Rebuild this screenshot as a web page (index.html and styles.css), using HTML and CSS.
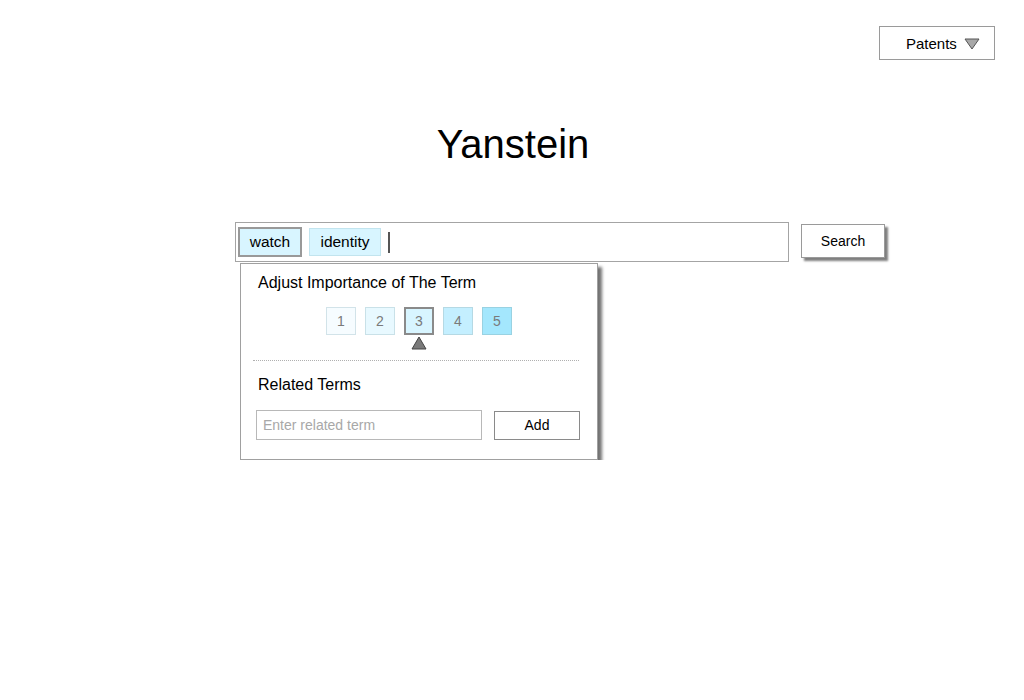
FILE: index.html
```html
<!DOCTYPE html>
<html>
<head>
<meta charset="utf-8">
<link rel="stylesheet" href="styles.css">
</head>
<body>
  <header class="topbar">
    <div class="select">
      <span class="select-label">Patents</span>
      <svg class="select-arrow" width="16" height="12" viewBox="0 0 16 12"><polygon points="1,1 15,1 8,11" fill="#a8a8a8" stroke="#555" stroke-width="1"/></svg>
    </div>
  </header>
  <h1 class="title">Yanstein</h1>
  <main class="search-area">
    <div class="search-row">
      <div class="search-box">
        <span class="tag tag-active">watch</span>
        <span class="tag tag-plain">identity</span>
        <span class="caret"></span>
      </div>
      <div class="search-btn">Search</div>
    </div>
    <section class="term-menu">
      <div class="menu-heading">Adjust Importance of The Term</div>
      <div class="levels">
        <div class="level-cell"><span class="level l1">1</span></div>
        <div class="level-cell"><span class="level l2">2</span></div>
        <div class="level-cell"><span class="level l3">3</span><svg class="pointer" width="16" height="14" viewBox="0 0 16 14"><polygon points="8,1 15,13 1,13" fill="#7a7a7a" stroke="#444" stroke-width="1"/></svg></div>
        <div class="level-cell"><span class="level l4">4</span></div>
        <div class="level-cell"><span class="level l5">5</span></div>
      </div>
      <div class="divider"></div>
      <div class="menu-heading related">Related Terms</div>
      <div class="add-row">
        <div class="term-input">Enter related term</div>
        <div class="add-btn">Add</div>
      </div>
    </section>
  </main>
</body>
</html>
```

FILE: styles.css
```css
* { box-sizing: border-box; }
body {
  margin: 0;
  font-family: "Liberation Sans", Arial, sans-serif;
  color: #000;
  background: #fff;
}
.topbar {
  display: flex;
  justify-content: flex-end;
  padding: 26px 29px 0 0;
}
.select {
  width: 116px;
  height: 34px;
  border: 1px solid #9a9a9a;
  display: flex;
  align-items: center;
  padding-left: 26px;
  font-size: 15px;
}
.select-arrow { margin-left: 7px; margin-top: 1px; }
.title {
  margin: 61px 0 0 0;
  text-align: center;
  font-weight: normal;
  font-size: 40px;
  line-height: 46px;
  padding-left: 2px;
}
.search-area {
  display: block;
  margin-top: 55px;
  padding-left: 235px;
}
.search-row {
  display: flex;
  align-items: flex-start;
}
.search-box {
  width: 554px;
  height: 40px;
  border: 1px solid #a4a4a4;
  display: flex;
  align-items: center;
  padding-left: 2px;
  gap: 7px;
}
.tag {
  height: 28px;
  background: #d8f5ff;
  border: 1px solid #c2e4ee;
  font-size: 15.5px;
  display: flex;
  align-items: center;
  justify-content: center;
}
.tag-plain { width: 72px; }
.tag-active {
  width: 64px;
  height: 30px;
  border: 2px solid #999;
}
.caret {
  width: 2px;
  height: 21px;
  background: #555;
}
.search-btn {
  margin-left: 12px;
  margin-top: 2px;
  width: 84px;
  height: 34px;
  border: 1px solid #9a9a9a;
  display: flex;
  align-items: center;
  justify-content: center;
  font-size: 14px;
  box-shadow: 3px 3px 2px rgba(0,0,0,0.5);
}
.term-menu {
  display: block;
  margin: 1px 0 0 5px;
  width: 358px;
  background: #fff;
  border: 1px solid #a0a0a0;
  box-shadow: 4px 4px 3px rgba(0,0,0,0.55);
  padding: 9px 0 19px 0;
}
.menu-heading {
  margin-left: 17px;
  font-size: 16px;
  line-height: 20px;
}
.levels {
  display: flex;
  justify-content: center;
  gap: 9px;
  margin-top: 14px;
}
.level-cell {
  display: flex;
  flex-direction: column;
  align-items: center;
  width: 30px;
  height: 43px;
}
.level {
  width: 30px;
  height: 28px;
  border: 1px solid #c8dde4;
  display: flex;
  align-items: center;
  justify-content: center;
  font-size: 14px;
  color: #7a7a7a;
}
.pointer { margin-top: 1px; }
.l1 { background: #f6fcff; border-color: #d2e3e9; }
.l2 { background: #e8f9ff; border-color: #c9e1e8; }
.l3 { background: #d8f5ff; border: 2px solid #8a8a8a; }
.l4 { background: #c4efff; border-color: #b5d9e4; }
.l5 { background: #a4e7fd; border-color: #99d2e2; }
.divider {
  margin: 10px 18px 0 12px;
  border-top: 1px dotted #b0b0b0;
}
.related { margin-top: 14px; }
.add-row {
  display: flex;
  align-items: center;
  margin: 15px 0 0 15px;
  gap: 12px;
}
.term-input {
  width: 226px;
  height: 30px;
  border: 1px solid #b8b8b8;
  font-size: 14px;
  color: #a8a8a8;
  display: flex;
  align-items: center;
  padding-left: 6px;
}
.add-btn {
  width: 86px;
  height: 29px;
  border: 1px solid #8a8a8a;
  font-size: 14px;
  display: flex;
  align-items: center;
  justify-content: center;
}
```
